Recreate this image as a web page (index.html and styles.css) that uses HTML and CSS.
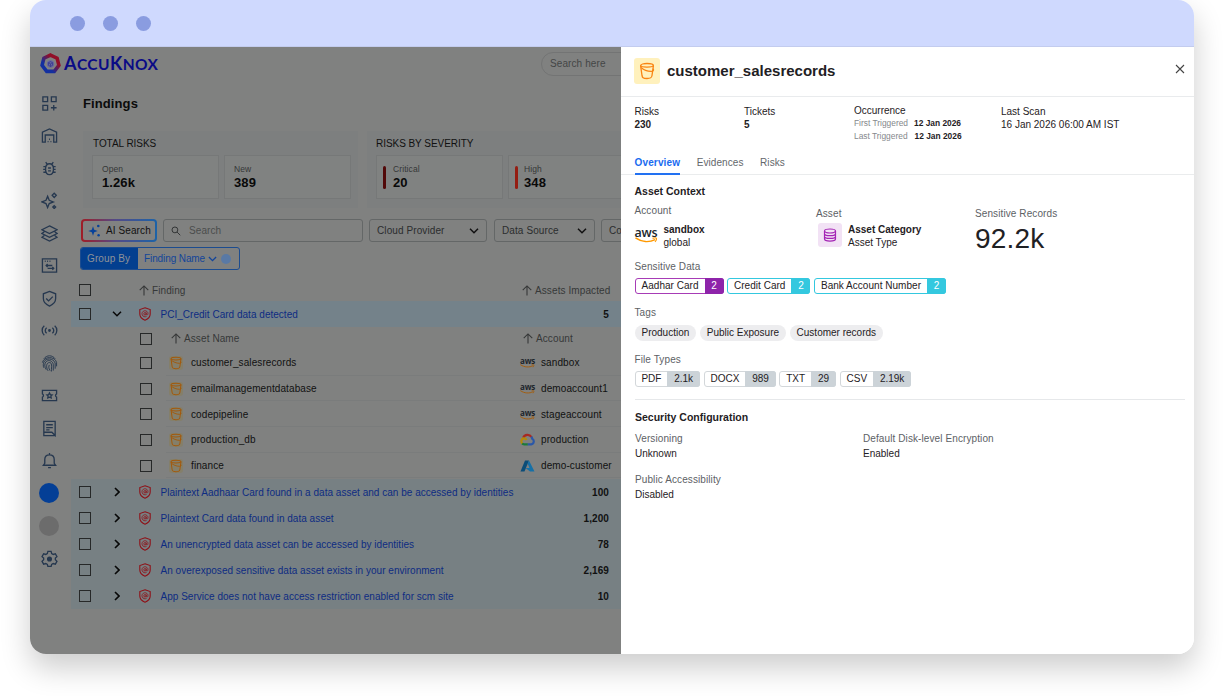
FILE: index.html
```html
<!DOCTYPE html>
<html lang="en">
<head>
  <meta charset="UTF-8">
  <title>AccuKnox - Findings</title>
  <link rel="stylesheet" href="styles.css">
</head>
<body>

  <svg class="defs">
    <linearGradient id="hexGrad" x1="1" y1="0" x2="0" y2="1">
      <stop offset="0.3" stop-color="#920f28"/>
      <stop offset="0.7" stop-color="#1330a0"/>
    </linearGradient>
    <symbol id="shield" viewBox="0 0 12 14">
      <path d="M6 .8 11.200 2.600v4.400c0 3-2.200 5-5.200 6.200C3 12 .8 10 .8 7V2.600Z" fill="none" stroke="currentColor" stroke-width="1.100"/>
      <circle cx="6" cy="6.800" r="1.200" fill="none" stroke="currentColor" stroke-width=".8"/>
      <path d="M7.200 5.500v1.600c0 1.200 1.800 1.100 1.800-.3A3 3 0 1 0 7.600 9.300" fill="none" stroke="currentColor" stroke-width=".8"/>
    </symbol>
    <symbol id="bucket" viewBox="0 0 16 18">
      <path d="M1.600 3.600 3 13.500c.4 2 .8 3 5 3s4.700-1 5-3l1.400-9.900" fill="none" stroke="currentColor" stroke-width="1.300"/>
      <path d="M1.600 3.600C1.600.8 14.400.8 14.400 3.600 14.400 5.600 1.600 5.600 1.600 3.600Z" fill="none" stroke="currentColor" stroke-width="1.300"/>
      <path d="M2.200 5.500c2 2 6.500 4 10.300 3.900 2.300 0 2.600-1.900 1.400-2.500" fill="none" stroke="currentColor" stroke-width="1.200"/>
    </symbol>
    <symbol id="up" viewBox="0 0 11 12">
      <path d="M5.500 11.500V1M.8 5.700 5.500 1l4.700 4.700" fill="none" stroke="currentColor" stroke-width="1.200"/>
    </symbol>
    <symbol id="down" viewBox="0 0 10 6">
      <path d="M1 .8 5 4.800 9 .8" fill="none" stroke="currentColor" stroke-width="1.500"/>
    </symbol>
    <symbol id="right" viewBox="0 0 6 10">
      <path d="M1 1l4 4-4 4" fill="none" stroke="currentColor" stroke-width="1.600"/>
    </symbol>
    <symbol id="smile" viewBox="0 0 24 6">
      <path d="M.5.800C7 5.300 15 5.500 21 2.600" fill="none" stroke="currentColor" stroke-width="1.600"/>
      <path d="M18.300 1.300c2-.8 3.600-.8 4 0 .3 1-.3 2.500-1.400 3.600" fill="none" stroke="currentColor" stroke-width="1.200"/>
    </symbol>
  </svg>

  <div class="window">
    <div class="titlebar"><i></i><i></i><i></i></div>

    <div class="content">
      <div class="dashboard">
        <header>
          <svg class="logo" viewBox="0 0 20 20">
            <path d="M10 2 16.300 5 18 11.800 13.600 17.500H6.400L2 11.800 3.700 5Z" fill="none" stroke="url(#hexGrad)" stroke-width="3.400"/>
            <circle cx="10" cy="10.500" r="3.500" fill="#6667a0"/>
            <path d="m10 8.200 2 1.100v2.400l-2 1.100-2-1.100V9.300Zm-2 1.100 2 1.100 2-1.100M10 10.400v2.400" fill="none" stroke="#2d2f8c" stroke-width=".6"/>
          </svg>
          <div class="brand">A<span>CCU</span>K<span>NOX</span></div>
          <div class="top-search">Search here</div>
        </header>

        <div class="below">
          <nav>
            <a><svg viewBox="0 0 18 18"><path d="M2 2h5v5H2ZM11 2h5v5h-5ZM2 11h5v5H2ZM13.500 10.500v6M10.500 13.500h6"/></svg></a>
            <a><svg viewBox="0 0 18 18"><path d="M1.500 16V5.500L9 2l7.500 3.500V16h-3V8.500h-9V16ZM7 15.500h1M10 15.500h1M8.500 13h1"/></svg></a>
            <a><svg viewBox="0 0 18 18"><path d="M9 4c3 0 4.200 2 4.200 5.500S12 15.500 9 15.500 4.800 13 4.800 9.500 6 4 9 4ZM6.500 4.500 5 2.200M11.500 4.500 13 2.200M4.800 7H2.500M4.800 10h-2.500M5 13H2.500M13.200 7h2.300M13.200 10h2.300M13 13h2.500M7.500 8.500h3M7.500 11.500h3"/></svg></a>
            <a><svg viewBox="0 0 18 18"><path d="M7 4.500 8.700 8.800 13 10.500 8.700 12.200 7 16.500 5.300 12.200 1 10.500 5.300 8.800ZM14 1.200 16.200 3.500 14 5.800 11.800 3.500ZM14 14.500l1.500 1.500-1.500 1.500-1.500-1.500Z"/></svg></a>
            <a><svg viewBox="0 0 18 18"><path d="M9 1 17 5 9 9 1 5ZM3.500 7.200 1 9l8 4 8-4-2.500-1.800M3.500 11.200 1 13l8 4 8-4-2.500-1.800"/></svg></a>
            <a><svg viewBox="0 0 18 18"><path d="M1.500 2h15v14h-15ZM4 4.500h1M6.500 4.500h1M9 4.500h1M12 9H5.500M7 7.500 5.500 9 7 10.500M7 12h6.500M12 10.500l1.500 1.500-1.500 1.500"/></svg></a>
            <a><svg viewBox="0 0 18 18"><path d="M9 1.500 15.500 4v5c0 4-3 6.500-6.500 8-3.500-1.500-6.500-4-6.500-8V4ZM5.500 9l2.500 2.500L12.500 7"/></svg></a>
            <a><svg viewBox="0 0 18 18"><path d="M3.500 4C.5 6.500.5 11.500 3.500 14M14.500 4c3 2.500 3 7.500 0 10M6 6c-2 1.500-2 4.500 0 6M12 6c2 1.500 2 4.500 0 6"/><circle cx="9" cy="9" r=".8"/></svg></a>
            <a><svg class="finger" viewBox="0 0 18 18"><path d="M3 4C6-.2 12-.2 15 4M1.500 8c1.500-7 13.500-7 15 0v4M3 13.500c-1-2-.5-4.500 0-6 2-4.500 10-4.500 12 1v6M5.500 15.500c-2-3-2-7 0-8.500 3-2.500 7-.5 7.500 3v6.500M7.500 16.800C5 13 5.500 8 9 8c3 0 2 4 2 9.500M9.500 16.500C8 14 8 12 8.800 10.500"/></svg></a>
            <a><svg viewBox="0 0 18 18"><path d="M1.500 3.500h15v3.700a2 2 0 0 0 0 3.600v3.700h-15v-3.700a2 2 0 0 0 0-3.600Z"/><path d="m9 6.300.9 1.700 1.900.3-1.300 1.300.3 1.900L9 10.700l-1.800.8.300-1.900-1.300-1.300 1.900-.3Z"/></svg></a>
            <a><svg viewBox="0 0 18 18"><path d="M3 1.500h12v15l-3.500-3.500H3ZM3 13v3.500h12M5.500 5h7M5.500 8h7M5.500 10.500h3.500"/></svg></a>
            <a><svg viewBox="0 0 18 18"><path d="M2.500 14h13L14 12V8c0-3-2-5-5-5s-5 2-5 5v4ZM9 3V1M7.500 16.500h3"/></svg></a>
            <a><b class="dot blue"></b></a>
            <a><b class="dot"></b></a>
            <a><svg viewBox="0 0 18 18"><path d="M7.300 1.500h3.400l.6 2.300 1.600.9 2.300-.7 1.700 3-1.700 1.600v1.800l1.700 1.600-1.700 3-2.300-.7-1.600.9-.6 2.300H7.300l-.6-2.300-1.600-.9-2.300.7-1.700-3 1.700-1.600V8.600L1.100 7l1.700-3 2.300.7 1.600-.9Z"/><circle class="solid" cx="9" cy="9.500" r="2"/></svg></a>
          </nav>

          <main>
            <h1>Findings</h1>

            <div class="stats">
              <section class="total">
                <h2>TOTAL RISKS</h2>
                <div class="cards">
                  <div class="card"><div><small>Open</small><strong>1.26k</strong></div></div>
                  <div class="card"><div><small>New</small><strong>389</strong></div></div>
                </div>
              </section>
              <section class="severity">
                <h2>RISKS BY SEVERITY</h2>
                <div class="cards">
                  <div class="card"><i class="critical"></i><div><small>Critical</small><strong>20</strong></div></div>
                  <div class="card"><i class="high"></i><div><small>High</small><strong>348</strong></div></div>
                </div>
              </section>
            </div>

            <div class="filters">
              <div class="ai-search">
                <svg viewBox="0 0 13 13"><path d="M5 2.300 6.200 5.800 9.700 7 6.200 8.200 5 11.700 3.800 8.200.3 7l3.500-1.200Z"/><circle cx="10.300" cy="2" r="1.300"/><circle cx="10.600" cy="11.300" r="1.200"/></svg>
                AI Search
              </div>
              <div class="search">
                <svg viewBox="0 0 11 11"><circle cx="4.300" cy="4.300" r="3.200"/><path d="m6.700 6.700 3.500 3.500"/></svg>
                Search
              </div>
              <div class="select cloud">Cloud Provider <svg><use href="#down"/></svg></div>
              <div class="select source">Data Source <svg><use href="#down"/></svg></div>
              <div class="select more">Co</div>
            </div>

            <div class="group-by">
              <b>Group By</b>
              <span>Finding Name <svg><use href="#down"/></svg><i></i></span>
            </div>

            <div class="table">
              <div class="row head">
                <i class="check"></i>
                <span class="sort"><svg><use href="#up"/></svg>Finding</span>
                <span class="sort impacted"><svg><use href="#up"/></svg>Assets Impacted</span>
              </div>
              <div class="row open">
                <i class="check"></i><svg class="down"><use href="#down"/></svg><svg class="shield"><use href="#shield"/></svg>
                <a>PCI_Credit Card data detected</a><b>5</b>
              </div>

              <div class="sub-table">
                <div class="sub head">
                  <i class="check"></i>
                  <span class="sort asset-name"><svg><use href="#up"/></svg>Asset Name</span>
                  <span class="sort account"><svg><use href="#up"/></svg>Account</span>
                </div>
                <div class="sub">
                  <i class="check"></i><svg class="bucket"><use href="#bucket"/></svg><span>customer_salesrecords</span>
                  <span class="aws">aws<svg><use href="#smile"/></svg></span><span>sandbox</span>
                </div>
                <div class="sub">
                  <i class="check"></i><svg class="bucket"><use href="#bucket"/></svg><span>emailmanagementdatabase</span>
                  <span class="aws">aws<svg><use href="#smile"/></svg></span><span>demoaccount1</span>
                </div>
                <div class="sub">
                  <i class="check"></i><svg class="bucket"><use href="#bucket"/></svg><span>codepipeline</span>
                  <span class="aws">aws<svg><use href="#smile"/></svg></span><span>stageaccount</span>
                </div>
                <div class="sub">
                  <i class="check"></i><svg class="bucket"><use href="#bucket"/></svg><span>production_db</span>
                  <svg class="cloud-icon" viewBox="0 0 15 13">
                    <path d="M3.200 4.700A4.700 4.700 0 0 1 11.500 4" stroke="#a82a22"/>
                    <path d="M11.300 3.700c.6.700.8 1.200.9 2 2.200 1 2.200 5.300-1 5.600H7.500" stroke="#2b58a8"/>
                    <path d="M7.700 11.300H4.200c-1 0-1.700-.4-2.200-1" stroke="#1c7a3a"/>
                    <path d="M2.200 10.400C.8 8.800 1.200 6 3.500 5.400c1.500-.3 2.500.6 3 1.600" stroke="#b48a08"/>
                  </svg><span>production</span>
                </div>
                <div class="sub">
                  <i class="check"></i><svg class="bucket"><use href="#bucket"/></svg><span>finance</span>
                  <svg class="azure" viewBox="0 0 15 12">
                    <path d="M5 .5h4L4.500 11.500H.5Z" fill="#0b4d78"/>
                    <path d="M9 .5 14.500 11.500H10L5.500 8h4L7.700 3.700Z" fill="#1670a6"/>
                  </svg><span>demo-customer</span>
                </div>
              </div>

              <div class="row">
                <i class="check"></i><svg class="right"><use href="#right"/></svg><svg class="shield"><use href="#shield"/></svg>
                <a>Plaintext Aadhaar Card found in a data asset and can be accessed by identities</a><b>100</b>
              </div>
              <div class="row">
                <i class="check"></i><svg class="right"><use href="#right"/></svg><svg class="shield"><use href="#shield"/></svg>
                <a>Plaintext Card data found in data asset</a><b>1,200</b>
              </div>
              <div class="row">
                <i class="check"></i><svg class="right"><use href="#right"/></svg><svg class="shield"><use href="#shield"/></svg>
                <a>An unencrypted data asset can be accessed by identities</a><b>78</b>
              </div>
              <div class="row">
                <i class="check"></i><svg class="right"><use href="#right"/></svg><svg class="shield"><use href="#shield"/></svg>
                <a>An overexposed sensitive data asset exists in your environment</a><b>2,169</b>
              </div>
              <div class="row">
                <i class="check"></i><svg class="right"><use href="#right"/></svg><svg class="shield"><use href="#shield"/></svg>
                <a>App Service does not have access restriction enabled for scm site</a><b>10</b>
              </div>
            </div>
          </main>
        </div>
      </div>

      <aside class="panel">
        <div class="panel-head">
          <div class="bucket-box"><svg><use href="#bucket"/></svg></div>
          <h2>customer_salesrecords</h2>
          <svg class="close" viewBox="0 0 10 10"><path d="m1 1 8 8M9 1 1 9"/></svg>
        </div>

        <div class="summary">
          <div>Risks<br><b>230</b></div>
          <div>Tickets<br><b>5</b></div>
          <div class="occurrence">Occurrence
            <p>First Triggered <b>12 Jan 2026</b></p>
            <p>Last Triggered <b>12 Jan 2026</b></p>
          </div>
          <div class="scan">Last Scan<br>16 Jan 2026 06:00 AM IST</div>
        </div>

        <div class="tabs">
          <a class="active">Overview</a>
          <a>Evidences</a>
          <a>Risks</a>
        </div>

        <div class="details">
          <h3>Asset Context</h3>
          <div class="context">
            <div>
              <label>Account</label>
              <div class="entity">
                <span class="aws big">aws<svg><use href="#smile"/></svg></span>
                <div><b>sandbox</b><br>global</div>
              </div>
            </div>
            <div class="asset">
              <label>Asset</label>
              <div class="entity">
                <span class="db"><svg viewBox="0 0 14 14"><ellipse cx="7" cy="3" rx="5.500" ry="2"/><path d="M1.500 3v8c0 2.700 11 2.700 11 0V3M1.500 5.700c0 2.600 11 2.600 11 0M1.500 8.400c0 2.600 11 2.600 11 0"/></svg></span>
                <div><b>Asset Category</b><br>Asset Type</div>
              </div>
            </div>
            <div class="records">
              <label>Sensitive Records</label>
              <strong>92.2k</strong>
            </div>
          </div>

          <label>Sensitive Data</label>
          <div class="chips">
            <span class="chip purple">Aadhar Card<b>2</b></span>
            <span class="chip cyan">Credit Card<b>2</b></span>
            <span class="chip cyan">Bank Account Number<b>2</b></span>
          </div>

          <label>Tags</label>
          <div class="chips tags">
            <span>Production</span>
            <span>Public Exposure</span>
            <span>Customer records</span>
          </div>

          <label>File Types</label>
          <div class="chips files">
            <span class="chip">PDF<b>2.1k</b></span>
            <span class="chip">DOCX<b>989</b></span>
            <span class="chip">TXT<b>29</b></span>
            <span class="chip">CSV<b>2.19k</b></span>
          </div>
        </div>

        <div class="security">
          <h3>Security Configuration</h3>
          <div class="config">
            <div><label>Versioning</label>Unknown</div>
            <div><label>Default Disk-level Encryption</label>Enabled</div>
            <div><label>Public Accessibility</label>Disabled</div>
          </div>
        </div>
      </aside>
    </div>
  </div>

</body>
</html>
```

FILE: styles.css
```css
* {
  box-sizing: border-box;
}

body {
  margin: 0;
  height: 696px;
  overflow: hidden;
  background: #fff;
  font-family: "Liberation Sans", Arial, sans-serif;
  font-size: 10px;
  line-height: 13px;
  color: #1f2124;
}

h1, h2, h3, p {
  margin: 0;
}

svg {
  display: block;
  flex: none;
}

.defs {
  position: absolute;
  width: 0;
  height: 0;
}

.window {
  width: 1164px;
  height: 654px;
  margin: 0 30px;
  border-radius: 16px;
  overflow: hidden;
  box-shadow: 0 14px 30px rgba(0, 0, 0, 0.2);
}

.titlebar {
  height: 47px;
  padding-left: 40px;
  display: flex;
  align-items: center;
  gap: 18px;
  background: #cfd9fe;
  border-bottom: 1px solid #c3ccee;
}

.titlebar i {
  width: 15px;
  height: 15px;
  border-radius: 50%;
  background: #8a9ce0;
}

.content {
  display: flex;
  height: 607px;
}

/* left side, dimmed behind the panel */
.dashboard {
  width: 591px;
  overflow: hidden;
  background: #808180;
  letter-spacing: 0.1px;
}

header {
  display: flex;
  height: 40px;
  padding: 5px 0 0 10px;
}

.logo {
  width: 21px;
  height: 21px;
  margin-top: 1px;
}

.brand {
  margin-left: 3px;
  width: 99px;
  flex: none;
  font: bold 18px/23px Lato, sans-serif;
  color: #0b0b86;
  letter-spacing: 0.4px;
}

.brand span {
  font-size: 15.5px;
}

.top-search {
  margin-left: 378px;
  flex: none;
  width: 120px;
  height: 24px;
  padding-left: 8px;
  border: 1px solid #737474;
  border-radius: 12px;
  line-height: 22px;
  color: #444646;
}

.below {
  display: flex;
}

nav {
  width: 41px;
  flex: none;
}

nav a {
  height: 32.5px;
  width: 38px;
  display: flex;
  align-items: center;
  justify-content: center;
}

nav svg {
  width: 17px;
  height: 17px;
  fill: none;
  stroke: #26384f;
  stroke-width: 1.4;
}

nav .finger {
  stroke-width: 1;
}

nav .solid {
  fill: #26384f;
}

.dot {
  width: 20px;
  height: 20px;
  border-radius: 50%;
  background: #6c6c6c;
}

.dot.blue {
  background: #043f96;
}

main {
  flex: none;
  width: 600px;
}

h1 {
  padding: 7px 0 0 12px;
  font-size: 13px;
  line-height: 19px;
  color: #0b0b0b;
}

.stats {
  display: flex;
  gap: 9px;
  margin: 18px 0 0 12px;
}

.stats section {
  height: 77px;
  padding: 5px 9px;
  background: #7d7f7f;
}

.stats .total {
  width: 275px;
}

.stats .severity {
  width: 300px;
}

.stats h2 {
  font-size: 10px;
  font-weight: normal;
  line-height: 15px;
  letter-spacing: -0.05px;
  padding-left: 1px;
  color: #111;
}

.severity h2 {
  padding-left: 0;
}

.cards {
  display: flex;
  gap: 5px;
  margin-top: 4px;
}

.card {
  width: 127px;
  height: 44px;
  flex: none;
  display: flex;
  padding: 7px 9px;
  background: #808281;
  border: 1px solid #767878;
}

.card small, .card strong {
  display: block;
}

.card small {
  font-size: 8.5px;
  line-height: 13px;
  color: #353737;
}

.card strong {
  font-size: 13px;
  line-height: 13px;
  color: #090909;
}

.card i {
  width: 3px;
  height: 23px;
  margin: 3px 7px 0 -3px;
  border-radius: 2px;
  background: #520909;
}

.card i.high {
  margin-right: 6px;
  background: #951d12;
}

.filters {
  display: flex;
  gap: 6px;
  padding: 11px 0 0 10px;
}

.filters > div {
  flex: none;
  height: 23px;
  display: flex;
  align-items: center;
  border: 1px solid #646767;
  border-radius: 3px;
  color: #2b2d2e;
}

.filters .ai-search {
  width: 76px;
  padding-left: 5px;
  gap: 5px;
  border: 2px solid transparent;
  border-radius: 4px;
  background: linear-gradient(#818281, #818281) padding-box, linear-gradient(90deg, #a01d25, #544a86 45%, #1c63a8) border-box;
  color: #111;
}

.ai-search svg {
  width: 13px;
  height: 13px;
  fill: #07429a;
}

.filters .search {
  width: 200px;
  padding-left: 7px;
  gap: 8px;
  color: #4b4d4d;
}

.search svg {
  width: 10px;
  height: 10px;
  fill: none;
  stroke: #2b2d2e;
}

.filters .select {
  padding: 0 7px;
  justify-content: space-between;
}

.select svg {
  width: 10px;
  height: 6px;
  color: #111;
}

.filters .cloud {
  width: 118px;
}

.filters .source {
  width: 101px;
  margin-left: 1px;
}

.filters .more {
  width: 60px;
}

.group-by {
  display: flex;
  width: 160px;
  height: 23px;
  margin: 5px 0 0 9px;
  border: 1px solid #1c4c8f;
  border-radius: 3px;
  line-height: 21px;
  overflow: hidden;
}

.group-by b {
  width: 57px;
  flex: none;
  padding-left: 6px;
  background: #033f8f;
  color: #8e9298;
  font-weight: normal;
}

.group-by span {
  display: flex;
  align-items: center;
  padding-left: 6px;
  letter-spacing: -0.1px;
  color: #13459a;
}

.group-by svg {
  width: 9px;
  height: 6px;
  margin: 0 4px 0 3px;
}

.group-by i {
  width: 10px;
  height: 10px;
  border-radius: 50%;
  background: #5979a5;
}

.table {
  padding-top: 9px;
}

.row {
  display: grid;
  grid-template-columns: 12px 21px 9px 18px 12px 9px 385px 65px;
  align-items: center;
  height: 26px;
  padding-left: 8px;
  background: #778083;
  color: #0e2c82;
}

.row > *, .sub > * {
  grid-row: 1;
}

.row .check {
  grid-column: 1;
}

.row .down, .row .right {
  grid-column: 3;
}

.row .shield {
  grid-column: 5;
}

.row a {
  grid-column: 7;
  padding-left: 0.5px;
  white-space: nowrap;
  letter-spacing: 0.02px;
}

.row b {
  grid-column: 8;
  padding-right: 1px;
  text-align: right;
  color: #111;
}

.row.head {
  height: 22px;
  background: none;
}

.row .sort {
  grid-column: 5 / 8;
}

.row .impacted {
  grid-column: 7 / 9;
  padding-left: 362px;
}

.row.open {
  background: #74828a;
}

.check {
  width: 12px;
  height: 12px;
  border: 1.5px solid #262828;
}

.down {
  width: 10px;
  height: 6px;
  color: #080808;
}

.right {
  width: 6px;
  height: 10px;
  margin-left: 2px;
  color: #080808;
}

.shield {
  width: 12px;
  height: 14px;
  color: #8f1017;
}

.sort {
  display: flex;
  align-items: center;
  gap: 3px;
  white-space: nowrap;
  color: #363838;
}

.sort svg {
  width: 10px;
  height: 11px;
}

.sub-table {
  height: 152px;
}

.sub {
  display: grid;
  grid-template-columns: 12px 17px 14px 8px 329px 15px 6px 80px;
  align-items: center;
  height: 25.7px;
  padding-left: 69px;
  color: #111;
}

.sub > :nth-child(2) {
  grid-column: 3;
}

.sub > :nth-child(3) {
  grid-column: 5;
}

.sub > :nth-child(4) {
  grid-column: 6;
}

.sub > :nth-child(5) {
  grid-column: 8;
}

.sub:not(.head) {
  background: linear-gradient(#7a7c7c, #7a7c7c) 95px bottom / 500px 1px no-repeat;
}

.sub.head {
  height: 23px;
}

.sub .asset-name {
  grid-column: 3 / 6;
  padding-left: 2px;
}

.sub .account {
  grid-column: 6 / 9;
  padding-left: 3px;
}

.bucket {
  width: 14px;
  height: 14px;
  color: #a3590b;
  background: #847f6a;
  border-radius: 3px;
}

.aws {
  display: block;
  font: bold 8px/7px "Open Sans", sans-serif;
  letter-spacing: -0.2px;
  color: #20262c;
}

.aws svg {
  width: 15px;
  height: 4px;
  color: #a35f10;
}

.cloud-icon {
  width: 15px;
  height: 13px;
  fill: none;
  stroke-width: 2.2;
}

.azure {
  width: 15px;
  height: 12px;
}

/* details panel */
.panel {
  width: 573px;
  background: #fff;
}

.panel-head {
  display: flex;
  align-items: center;
  height: 50px;
  padding: 0 9px 2px 13px;
  border-bottom: 1px solid #e9ebed;
}

.bucket-box {
  width: 26px;
  height: 26px;
  padding: 4px 5px;
  border-radius: 3px;
  background: #fff1bd;
  color: #f98412;
}

.bucket-box svg {
  width: 16px;
  height: 18px;
}

.panel-head h2 {
  flex: 1;
  margin-left: 7px;
  font-size: 15px;
  line-height: 20px;
}

.close {
  width: 10px;
  height: 10px;
  margin-bottom: 3px;
  fill: none;
  stroke: #444;
  stroke-width: 1.1;
}

.summary {
  display: grid;
  grid-template-columns: 109.5px 110px 147px 180px;
  height: 57px;
  padding: 8px 0 0 13.5px;
}

.occurrence {
  margin-top: -1px;
}

.occurrence p {
  display: flex;
  font-size: 8.4px;
  color: #85888c;
}

.occurrence b {
  margin-left: 6px;
  color: #1f2124;
}

.occurrence p:last-child b {
  margin-left: 7px;
}

.tabs {
  display: flex;
  gap: 16.5px;
  height: 21px;
  padding-left: 13.5px;
  border-bottom: 1px solid #eaeced;
  letter-spacing: 0.08px;
  color: #63676b;
}

.tabs a {
  height: 21px;
  padding-top: 1.5px;
}

.tabs .active {
  letter-spacing: 0.15px;
  color: #1a6bf0;
  font-weight: bold;
  border-bottom: 2px solid #2271f2;
}

.details {
  margin: 0 9px 0 13.5px;
  height: 225px;
  padding-top: 9px;
  border-bottom: 1px solid #e6e8ea;
}

h3 {
  font-size: 10.5px;
  line-height: 15px;
}

label {
  display: block;
  color: #5d6165;
  letter-spacing: 0.1px;
}

.context {
  display: grid;
  grid-template-columns: 181.5px 159px 200px;
  height: 56px;
  margin-top: 5px;
}

.entity {
  display: flex;
  gap: 6px;
  padding-top: 6px;
}

.asset, .records {
  padding-top: 3px;
}

.asset .entity {
  padding: 3px 0 0 2px;
}

.aws.big {
  width: 23px;
  padding-top: 5px;
  font-size: 12.5px;
  font-weight: 600;
  line-height: 9px;
}

.aws.big svg {
  width: 23px;
  height: 6px;
  color: #f90;
}

.db {
  width: 24px;
  height: 24px;
  padding: 5px;
  border-radius: 3px;
  background: #f2e2f5;
}

.db svg {
  width: 14px;
  height: 14px;
  fill: none;
  stroke: #a425b5;
  stroke-width: 1.2;
}

.records strong {
  display: block;
  margin-top: 3px;
  font-size: 28px;
  font-weight: normal;
  line-height: 32px;
  letter-spacing: 0.2px;
}

.chips {
  display: flex;
  gap: 3.5px;
  margin: 5px 0 12px;
}

.chip {
  display: flex;
  height: 16px;
  padding-left: 6px;
  border: 1px solid #d3d7da;
  border-radius: 3px;
  line-height: 14px;
  letter-spacing: 0.03px;
}

.chip b {
  margin: -1px -1px -1px 6px;
  padding: 0 6.7px;
  line-height: 16px;
  font-weight: normal;
  background: #ccd3d8;
  border-radius: 0 3px 3px 0;
}

.chip.purple {
  border-color: #a73bb6;
}

.chip.purple b {
  background: #8e24aa;
  color: #fff;
}

.chip.cyan {
  border-color: #34c8df;
}

.chip.cyan b {
  background: #34c8df;
  color: #fff;
}

.chips.tags {
  margin-top: 6px;
}

.tags span {
  height: 16px;
  padding: 0 7px;
  border-radius: 8px;
  background: #ededef;
  line-height: 16px;
}

.files .chip {
  letter-spacing: -0.05px;
}

.files .chip b {
  padding: 0 7px;
}

.security {
  padding: 10px 14px;
}

.config {
  display: grid;
  grid-template-columns: 228px 200px;
  gap: 13px 0;
  margin-top: 7px;
}

.config label {
  line-height: 14px;
  padding-bottom: 1px;
}
```
